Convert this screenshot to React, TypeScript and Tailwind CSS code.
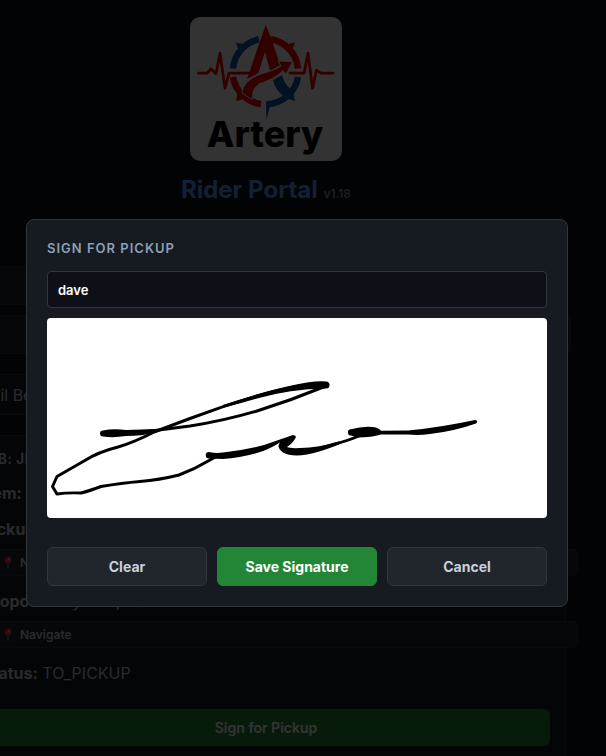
import { useState } from 'react'

const CARD = 'rounded-md border border-[#30363d] bg-[#161b22]'
const MODAL_BTN = 'h-[39px] flex-1 rounded-md border text-sm font-bold'

function Logo() {
  return (
    <div className="mx-auto w-[152px] rounded-[10px] bg-white">
      <svg viewBox="0 0 152 144" className="block w-full" role="img" aria-label="Artery">
        {/* ring */}
        <g fill="none" strokeWidth="6.500">
          <path d="M43 51.500A32.800 32.800 0 0 1 69 22.300" stroke="#0f5aa8" />
          <path d="M81 22.200A32.800 32.800 0 0 1 108 51.500" stroke="#ff0000" />
          <path d="M43 60A32.800 32.800 0 0 0 71 87" stroke="#ff0000" />
          <path d="M108 60A32.800 32.800 0 0 1 76.500 87.300" stroke="#0f5aa8" />
        </g>
        <path d="M46 25.500l9 2-6 7z" fill="#0f5aa8" />
        <path d="M105 25.500l-9 2 6 7z" fill="#ff0000" />
        <path d="M46 84l2.500-12 9 9z" fill="#ff0000" />
        <path d="M76 85h5l-1.500 6-3 12z" fill="#0f5aa8" />
        {/* letter A */}
        <path d="M83 63l9-5c2 8 6 12 11 16l2 10-9-3c-7-5-11-10-13-18z" fill="#0f5aa8" />
        <path d="M75.700 8l5 12 9.500 28-10 6-5.200-19-6.500 21-5.500 3-6 3z" fill="#ff0000" />
        <path
          d="M52 76c1-8 6-13 14-17 9-4 15-4 25-10l-3-5 14.500.500-6.500 13-3-4c-8 8-13 9-20 12-7 2-10 6-11 17z"
          fill="#ff0000"
          stroke="#fff"
          strokeWidth="1"
        />
        {/* pulse */}
        <g fill="none" stroke="#ff0000" strokeWidth="2.800" strokeLinecap="round" strokeLinejoin="round">
          <path d="M8.500 56.200h8.500l4-4.500 5 5 4-20.500 5 35 4-15h20" />
          <path d="M100 56.200h14l4-20 4.500 35 4-18 4.500 3h12" />
        </g>
        <text x="75" y="130" textAnchor="middle" className="fill-black font-['Inter',sans-serif] text-[36px] font-extrabold">
          Artery
        </text>
      </svg>
    </div>
  )
}

function Pin() {
  return (
    <svg viewBox="0 0 8 13" className="h-[13px] w-2" aria-hidden="true">
      <path d="M4 7v6" stroke="#8a9299" strokeWidth="1" />
      <circle cx="4" cy="4" r="3.500" fill="#dd2e44" />
      <circle cx="5" cy="3" r="1" fill="#f4a0aa" />
    </svg>
  )
}

function NavigateButton() {
  return (
    <div className="mt-2 -mr-7">
      <button className="flex h-[27px] w-full items-center gap-2 rounded-md border border-[#30363d] bg-[#21262d] pl-[21px] text-xs font-semibold text-[#c9d1d9]">
        <Pin />
        Navigate
      </button>
    </div>
  )
}

function Portal() {
  return (
    <main className="-ml-[34px] mr-10 pt-[17px]">
      <Logo />
      <h1 className="mt-[13px] text-center text-2xl font-bold text-[#58a6ff]">
        Rider Portal <small className="text-xs font-semibold text-[#8b949e]">v1.18</small>
      </h1>
      <div className="mt-[60px] mr-1 h-[39px] rounded-md border border-[#30363d] bg-[#21262d]" />
      <div className="-mr-[5px] mt-[10px] h-[39px] rounded-md border border-[#30363d] bg-[#21262d]" />
      <section className={`${CARD} mt-5 flex h-[41px] items-center px-3 text-base text-[#c9d1d9]`}>
        Neil Bennett
      </section>
      <section className={`${CARD} mt-5 flex h-[360px] flex-col px-[15px] pt-[11px] text-base text-[#c9d1d9]`}>
        <h2 className="-ml-1 text-sm leading-6 font-bold tracking-wide">JOB: JB-1042</h2>
        <p className="mt-[10px]"><b>Item:</b> Samples</p>
        <p className="mt-3"><b>Pickup:</b> Main Street</p>
        <NavigateButton />
        <p className="mt-[13px]"><b>Dropoff:</b> City Hospital</p>
        <NavigateButton />
        <p className="mt-[13px]"><b>Status:</b> TO_PICKUP</p>
        <button className="mt-6 h-[37px] shrink-0 rounded-md bg-[#238636] text-sm font-semibold text-white">
          Sign for Pickup
        </button>
      </section>
    </main>
  )
}

function Signature() {
  return (
    <svg viewBox="0 0 500 200" className="block w-full rounded bg-white" role="img" aria-label="Signature">
      {/* thin strokes */}
      <g fill="none" stroke="#000" strokeWidth="3" strokeLinecap="round" strokeLinejoin="round">
        <path d="M56 115.500C75 116 90 115 108 112.500L143 108Q176 103 210 93Q245 82 279 68" />
        <path d="M266 66.500Q245 68 210 78Q176 88 143 100.500L107 114Q88 124 71 129Q51 134 37 143L10 158.500L5.500 168.500L10 176Q20 174.500 34 175Q42 173 54 168.500Q75 165 93 163.500Q112 162 132 157Q148 151 163 142L172 137" />
        <path d="M250 133C262 134 276 130 288 126Q303 122 313 117.500" />
      </g>
      {/* pen pressure */}
      <g>
        <path d="M56 112.500Q66 110.500 79 112L110 111V114.500Q94 118 79 118Q66 120 56 118.500A3 3 0 0 1 56 112.500z" />
        <path d="M279 63.500Q266 62.500 240 68.500Q210 75.500 176 87L177 89.500Q195 85 210 80.500Q243 71 279 70.500A3.500 3.500 0 0 0 279 63.500z" />
        <path d="M162 134Q169 135.500 176 134.500Q196 132.500 217 127L246 117Q250 117.500 248.500 120Q246 125 240 129Q243 130.500 253 130Q272 129.500 292 123.500V126.500Q272 134.500 260 136.500Q244 139 236 134.500Q229 129 233 124.500Q221 132 210 135Q193 140 176 141L162 140.500A3.200 3.200 0 0 1 162 134z" />
        <path d="M304 111.300Q315 108 326 109Q332 110 334 112.700L361 112.500Q393 109.500 428 102Q432 103 429 105.500Q408 113 383 116Q372 117.500 361 116.500H334Q325 119.500 310 119.500L304 117.500A3 3 0 0 1 304 111.300z" />
      </g>
    </svg>
  )
}

export default function App() {
  const [name, setName] = useState('dave')

  return (
    <div className="relative h-screen overflow-hidden bg-[#0d1117] font-['Inter',sans-serif]">
      <Portal />

      <div className="fixed inset-0 flex items-start bg-black/80 pt-[219px] pr-[38px] pl-[26px]">
        <div role="dialog" aria-labelledby="sign-title" className="flex-1 rounded-lg border border-[#30363d] bg-[#161b22] p-5">
          <h3 id="sign-title" className="-mt-0.5 text-[13px] leading-5 font-semibold tracking-[1px] text-[#8b9fb8] uppercase">
            Sign for Pickup
          </h3>
          <input
            aria-label="Name"
            value={name}
            onChange={(e) => setName(e.target.value)}
            className="mt-[13px] mb-[10px] block h-[37px] w-full rounded border border-[#30363d] bg-[#0d1117] px-[10px] text-[13px] font-semibold text-white outline-none"
          />
          <Signature />
          <div className="mt-[29px] flex gap-[10px]">
            <button className={`${MODAL_BTN} border-[#30363d] bg-[#21262d] text-[#c9d1d9]`}>Clear</button>
            <button className={`${MODAL_BTN} border-[#238636] bg-[#238636] text-white`}>Save Signature</button>
            <button className={`${MODAL_BTN} border-[#30363d] bg-[#21262d] text-[#c9d1d9]`}>Cancel</button>
          </div>
        </div>
      </div>
    </div>
  )
}
